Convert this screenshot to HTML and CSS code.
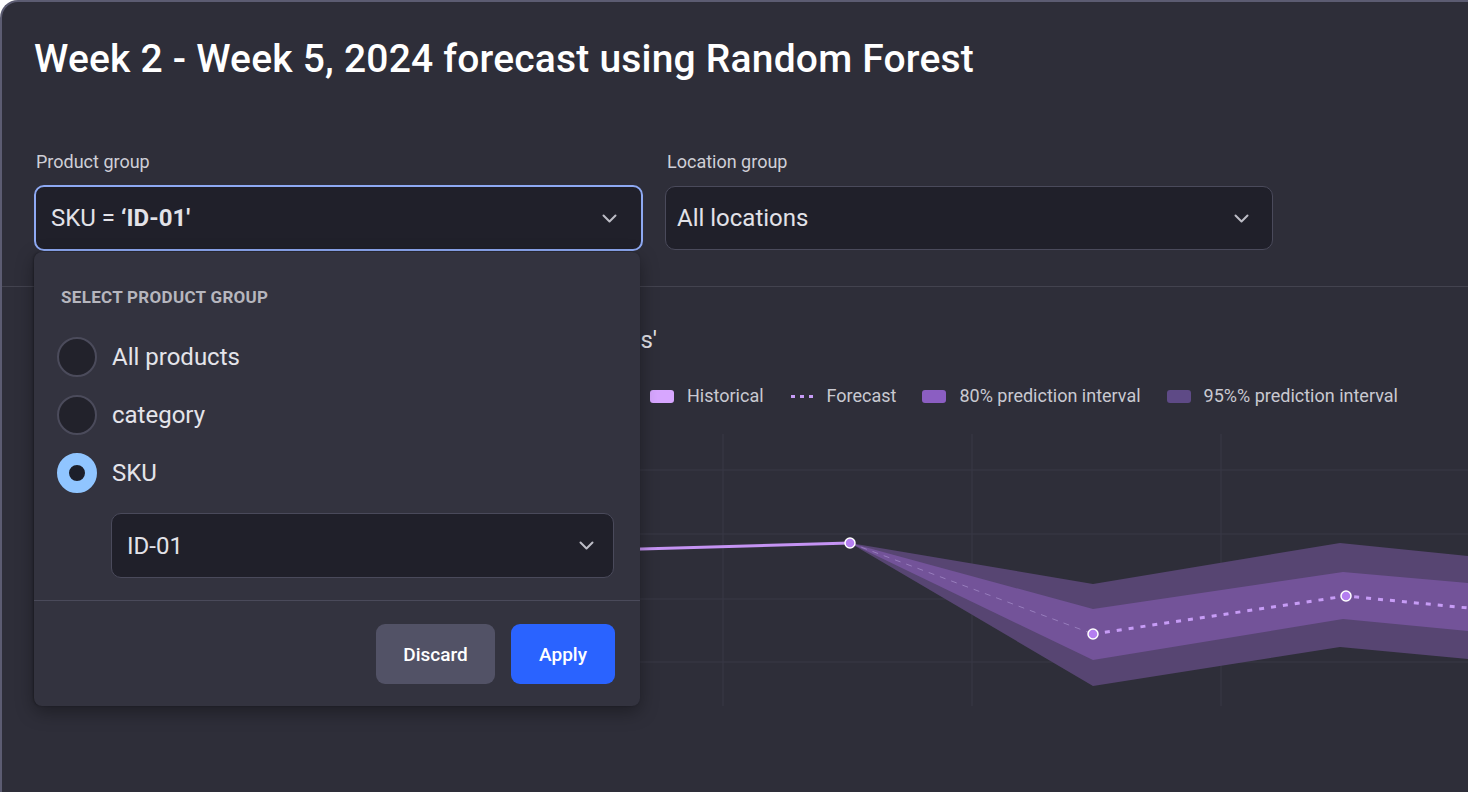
FILE: index.html
```html
<!DOCTYPE html>
<html lang="en">
<head>
<meta charset="utf-8">
<title>Forecast</title>
<link rel="stylesheet" href="styles.css">
</head>
<body>
<div class="frame">
  <h1 class="title">Week 2 - Week 5, 2024 forecast using Random Forest</h1>

  <div class="filters">
    <div class="field field-product">
      <div class="field-label">Product group</div>
      <div class="select select-focused">
        <span class="select-value">SKU = <b>‘ID-01'</b></span>
        <svg class="chevron" width="15" height="9" viewBox="0 0 15 9"><polyline points="1.5,1.5 7.5,7.5 13.5,1.5"/></svg>
      </div>

      <div class="dropdown">
        <div class="dropdown-body">
          <div class="dropdown-heading">SELECT PRODUCT GROUP</div>
          <div class="radio-list">
            <div class="radio-row"><span class="radio"></span><span class="radio-label">All products</span></div>
            <div class="radio-row"><span class="radio"></span><span class="radio-label">category</span></div>
            <div class="radio-row"><span class="radio radio-checked"></span><span class="radio-label">SKU</span></div>
          </div>
          <div class="select select-sub">
            <span class="select-value">ID-01</span>
            <svg class="chevron" width="15" height="9" viewBox="0 0 15 9"><polyline points="1.5,1.5 7.5,7.5 13.5,1.5"/></svg>
          </div>
        </div>
        <div class="dropdown-footer">
          <button class="btn btn-secondary">Discard</button>
          <button class="btn btn-primary">Apply</button>
        </div>
      </div>
    </div>

    <div class="field field-location">
      <div class="field-label">Location group</div>
      <div class="select select-loc">
        <span class="select-value">All locations</span>
        <svg class="chevron" width="15" height="9" viewBox="0 0 15 9"><polyline points="1.5,1.5 7.5,7.5 13.5,1.5"/></svg>
      </div>
    </div>
  </div>

  <section class="chart">
    <div class="chart-title">Sales for ‘All locations'</div>
    <div class="legend">
      <div class="legend-item"><span class="swatch swatch-hist"></span>Historical</div>
      <div class="legend-item">
        <svg class="swatch-dots" width="24" height="13" viewBox="0 0 24 13"><line x1="1" y1="6.5" x2="24" y2="6.5"/></svg>Forecast
      </div>
      <div class="legend-item"><span class="swatch swatch-80"></span>80% prediction interval</div>
      <div class="legend-item"><span class="swatch swatch-95"></span>95%% prediction interval</div>
    </div>
    <svg class="plot" width="1434" height="286" viewBox="34 420 1434 286">
      <g class="grid">
        <line x1="34" y1="470" x2="1468" y2="470"/>
        <line x1="34" y1="534" x2="1468" y2="534"/>
        <line x1="34" y1="599" x2="1468" y2="599"/>
        <line x1="34" y1="662" x2="1468" y2="662"/>
        <line x1="474" y1="434" x2="474" y2="706"/>
        <line x1="723" y1="434" x2="723" y2="706"/>
        <line x1="972" y1="434" x2="972" y2="706"/>
        <line x1="1221" y1="434" x2="1221" y2="706"/>
      </g>
      <polygon class="band-95" points="850,543 1093,584 1340,543 1468,556 1468,659 1340,647 1093,686"/>
      <polygon class="band-80" points="850,543 1093,609 1343,572 1468,583 1468,631 1343,619 1093,660"/>
      <polyline class="hist-line" points="100,561 300,556 500,552 641,549 850,543"/>
      <line class="fc-thin" x1="850" y1="543" x2="1093" y2="634"/>
      <polyline class="fc-line" points="1093,634 1346,596 1468,608"/>
      <circle class="marker" cx="850" cy="543" r="5"/>
      <circle class="marker" cx="1093" cy="634" r="5"/>
      <circle class="marker" cx="1346" cy="596" r="5"/>
    </svg>
  </section>
</div>
</body>
</html>
```

FILE: styles.css
```css
* { box-sizing: border-box; }

html, body {
  margin: 0;
  padding: 0;
  background: #ffffff;
}

body {
  font-family: Roboto, "Liberation Sans", sans-serif;
  color: #e4e4ea;
  width: 1468px;
  height: 792px;
  overflow: hidden;
}

.frame {
  position: relative;
  width: 1468px;
  height: 792px;
  background: #2e2e39;
  border-top: 2px solid #5c5c72;
  border-left: 2px solid #5c5c72;
  border-top-left-radius: 18px;
  padding: 33px 0 0 32px;
  overflow: hidden;
}

.title {
  margin: 0;
  font-family: Roboto, "Liberation Sans", sans-serif;
  font-weight: 500;
  font-size: 39px;
  line-height: 48px;
  letter-spacing: 0.2px;
  color: #ffffff;
}

.filters {
  display: flex;
  gap: 22px;
  margin-top: 68px;
}

.field {
  position: relative;
  display: flex;
  flex-direction: column;
}

.field-product { width: 609px; }
.field-location { width: 608px; }

.field-label {
  font-size: 18px;
  line-height: 22px;
  color: #cfcfd7;
  padding-left: 2px;
  margin-bottom: 13px;
}

.select {
  display: flex;
  align-items: center;
  justify-content: space-between;
  height: 64px;
  background: #20202a;
  border: 1px solid #4a4a5b;
  border-radius: 10px;
  padding: 0 23px 0 11px;
  font-size: 24px;
  color: #e2e2e8;
}

.select-focused {
  height: 66px;
  margin: -1px 0;
  border: 2px solid #8ea9f3;
  padding: 0 24px 0 15px;
}

.select-value b { font-weight: 700; }

.chevron polyline {
  fill: none;
  stroke: #bdbdc6;
  stroke-width: 2;
  stroke-linecap: round;
  stroke-linejoin: round;
}

/* dropdown overlay */
.dropdown {
  position: absolute;
  top: calc(100% + 2px);
  left: 0;
  width: 606px;
  height: 454px;
  background: #33333f;
  border-radius: 8px;
  box-shadow: 0 6px 18px rgba(0, 0, 0, 0.35), -1px 0 2px rgba(0, 0, 0, 0.25);
  z-index: 5;
  display: flex;
  flex-direction: column;
}

.dropdown-body {
  padding: 35px 26px 22px 23px;
  border-bottom: 1px solid #4a4a5a;
}

.dropdown-heading {
  font-size: 17px;
  line-height: 20px;
  font-weight: 700;
  letter-spacing: 0.3px;
  color: #b6b6be;
  margin-left: 4px;
}

.radio-list {
  margin-top: 30px;
  display: flex;
  flex-direction: column;
  gap: 18px;
}

.radio-row {
  display: flex;
  align-items: center;
  gap: 15px;
  height: 40px;
}

.radio {
  width: 40px;
  height: 40px;
  flex: none;
  border-radius: 50%;
  background: #22222b;
  border: 2px solid #4b4b5b;
}

.radio-checked {
  background: #1c1f2a;
  border: 12px solid #90c5ff;
}

.radio-label {
  font-size: 24px;
  color: #e4e4ea;
}

.select-sub {
  margin: 20px 0 0 54px;
  height: 65px;
  padding: 0 19px 0 15px;
}

.dropdown-footer {
  display: flex;
  justify-content: flex-end;
  gap: 16px;
  padding: 23px 25px 0 0;
}

.btn {
  height: 60px;
  border: none;
  border-radius: 9px;
  font-family: Roboto, "Liberation Sans", sans-serif;
  font-size: 19px;
  font-weight: 500;
  color: #ffffff;
  padding: 0;
}

.btn-secondary {
  width: 119px;
  background: #525266;
}

.btn-primary {
  width: 104px;
  background: #2a63ff;
}

/* chart */
.chart {
  margin-top: 36px;
  border-top: 1px solid #43434f;
  margin-left: -32px;
  padding-left: 34px;
}

.chart-title {
  width: 621px;
  padding-top: 38px;
  text-align: right;
  font-size: 24px;
  line-height: 30px;
  color: #e4e4ea;
  white-space: nowrap;
}

.legend {
  display: flex;
  align-items: center;
  gap: 26px;
  margin-top: 30px;
  padding-left: 614px;
  font-size: 18px;
  line-height: 22px;
  color: #c9c9d1;
}

.legend-item {
  display: flex;
  align-items: center;
  gap: 13px;
}

.swatch {
  width: 24px;
  height: 13px;
  border-radius: 3px;
  flex: none;
}

.swatch-hist { background: #d7a6ff; }
.swatch-80 { background: #8b5ec2; }
.swatch-95 { background: #5e4a86; }

.swatch-dots line {
  stroke: #c79cf6;
  stroke-width: 3;
  stroke-dasharray: 4 5;
}

.plot {
  display: block;
  margin-top: 13px;
  margin-left: -2px;
}

.grid line {
  stroke: #393946;
  stroke-width: 1;
}

.band-95 { fill: #574572; }
.band-80 { fill: #735399; }

.hist-line {
  fill: none;
  stroke: #c593f4;
  stroke-width: 3;
  stroke-linecap: round;
}

.fc-thin {
  stroke: #a78fcc;
  stroke-width: 1;
  stroke-dasharray: 6 6;
  opacity: 0.7;
}

.fc-line {
  fill: none;
  stroke: #c79cf6;
  stroke-width: 3;
  stroke-dasharray: 5 7;
}

.marker {
  fill: #b47ef0;
  stroke: #ffffff;
  stroke-width: 1.5;
}
```
